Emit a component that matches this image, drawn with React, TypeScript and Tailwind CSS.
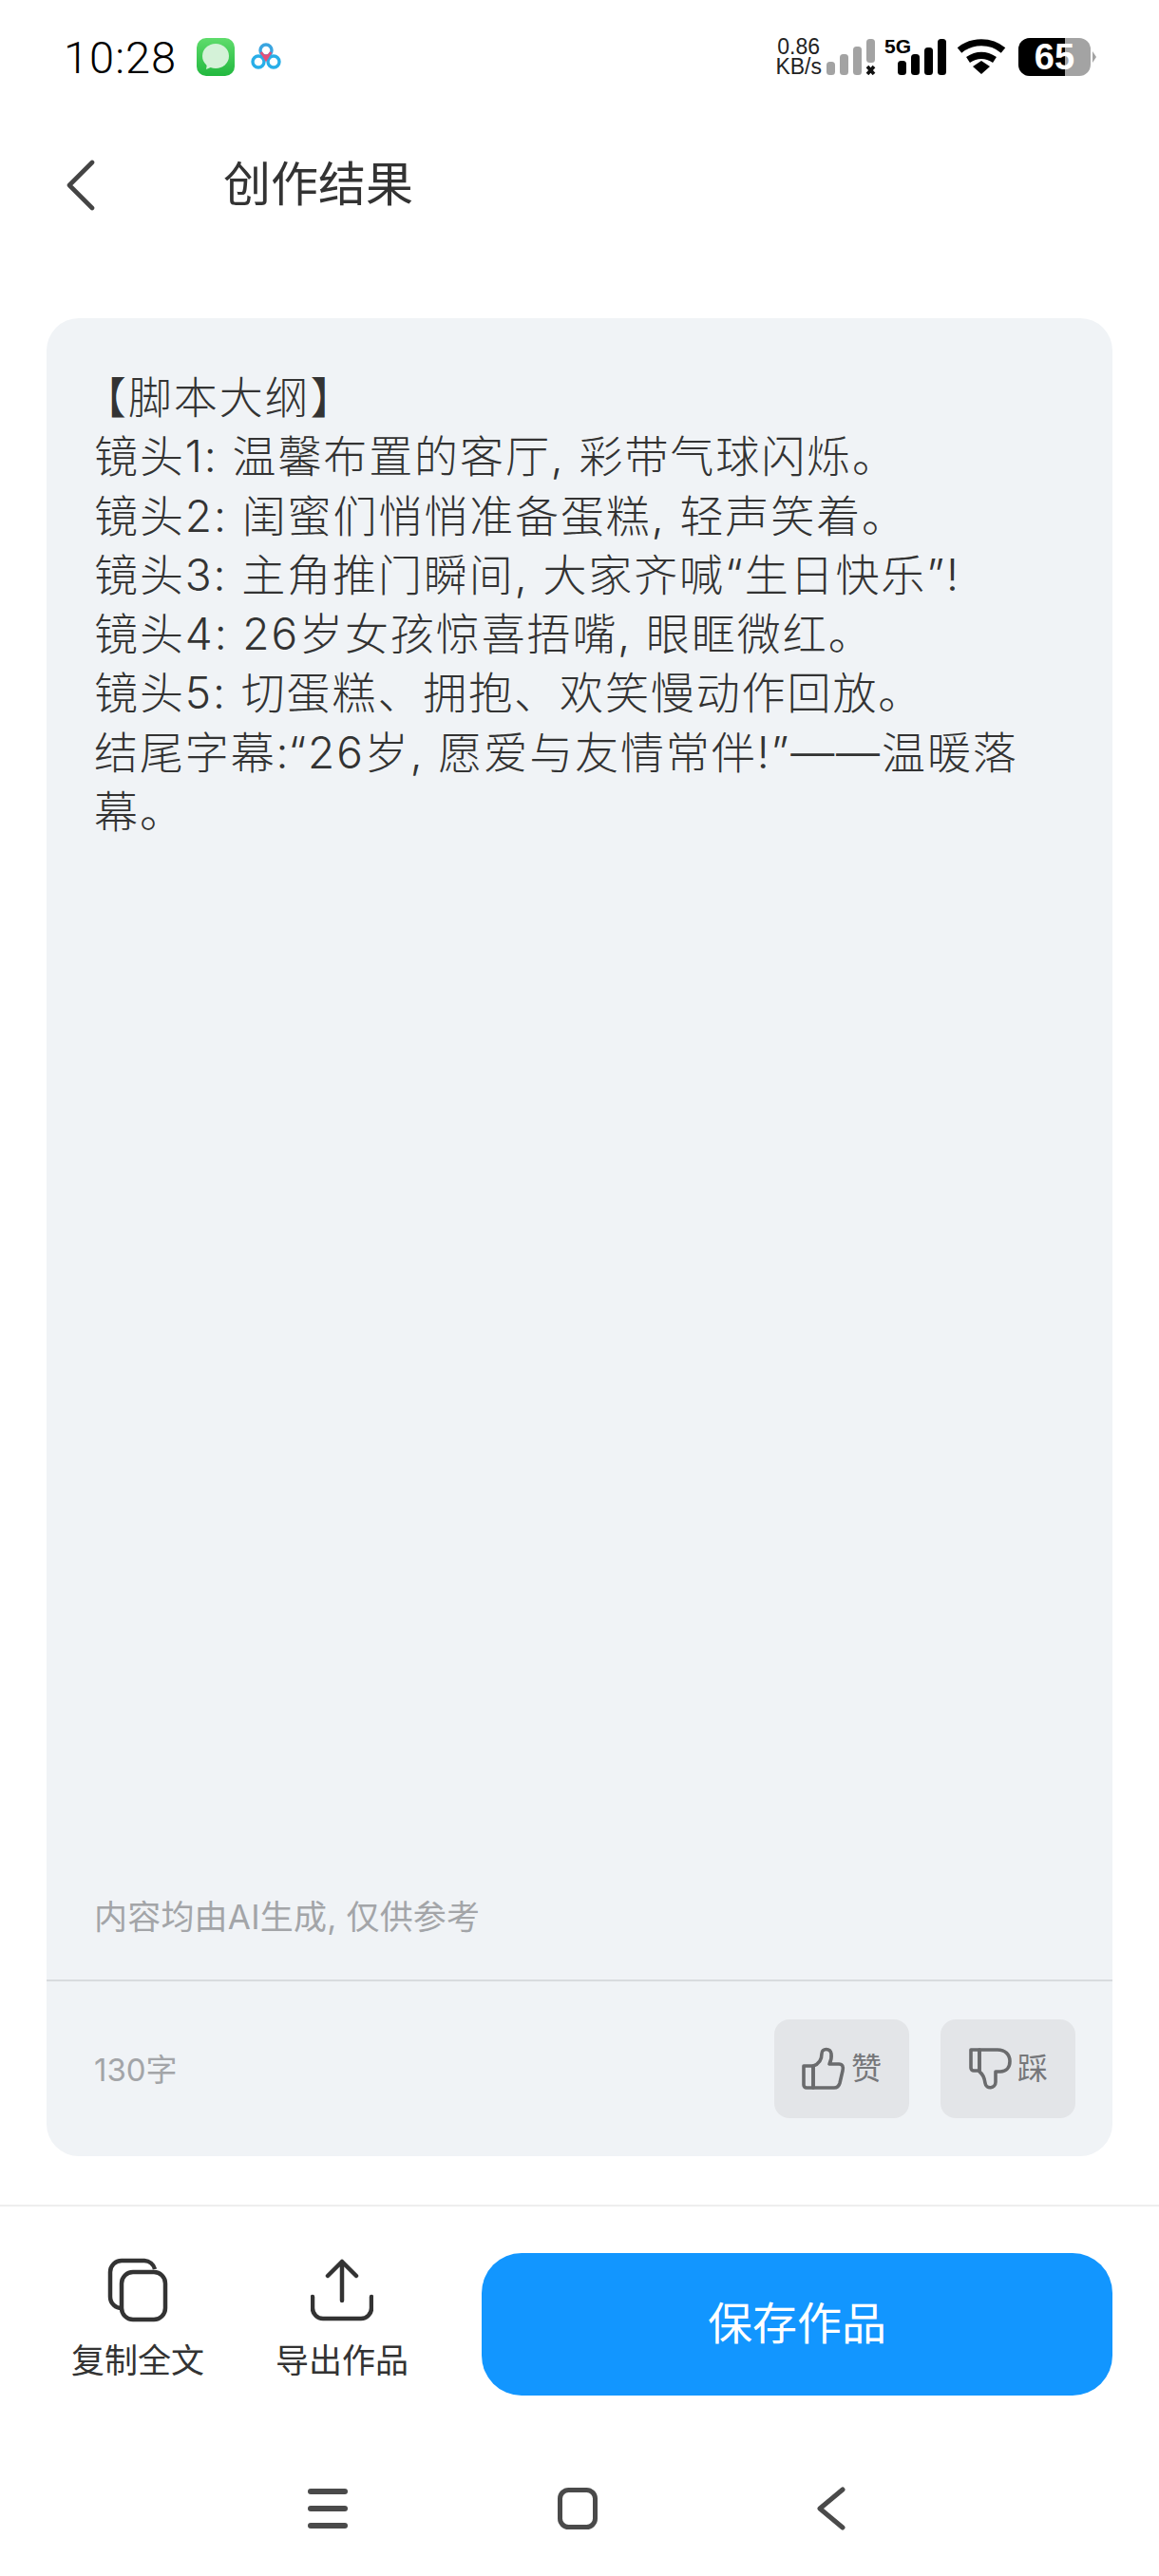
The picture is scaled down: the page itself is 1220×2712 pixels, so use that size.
import React from 'react';

const CJK = 'font-["Inter","Noto_Sans_CJK_SC","Noto_Sans",sans-serif]';

const LINES = [
  '镜头1: 温馨布置的客厅, 彩带气球闪烁。',
  '镜头2: 闺蜜们悄悄准备蛋糕, 轻声笑着。',
  '镜头3: 主角推门瞬间, 大家齐喊“生日快乐”!',
  '镜头4: 26岁女孩惊喜捂嘴, 眼眶微红。',
  '镜头5: 切蛋糕、拥抱、欢笑慢动作回放。',
  '结尾字幕:“26岁, 愿爱与友情常伴!”——温暖落幕。',
];

function StatusBar() {
  return (
    <div className="h-[120px] pl-[67px] pr-[66px] flex items-center justify-between">
      <div className="flex items-center">
        <span className='font-["Roboto",sans-serif] text-[47px] leading-none font-light text-black tracking-[1px]'>10:28</span>
        <svg width="40" height="40" viewBox="0 0 40 40" className="ml-[21px]">
          <defs>
            <linearGradient id="msg" x1="0" y1="0" x2="0" y2="1">
              <stop offset="0" stopColor="#5fdc6c" />
              <stop offset="1" stopColor="#22b83f" />
            </linearGradient>
          </defs>
          <rect width="40" height="40" rx="10" fill="url(#msg)" />
          <ellipse cx="20" cy="19" rx="14" ry="13" fill="#d4f2d8" />
          <path d="M11 27l-1 6 7-3z" fill="#d4f2d8" />
        </svg>
        <svg width="36" height="36" viewBox="0 0 36 36" className="ml-[15px]" fill="none" strokeWidth="3.4">
          <circle cx="18" cy="11" r="6" stroke="#3aa5e0" />
          <circle cx="10" cy="23" r="6" stroke="#28aee8" />
          <circle cx="26" cy="23" r="6" stroke="#28aee8" />
          <path d="M13 13a6 6 0 0 0 5 4 6 6 0 0 0 5-4l-5 8z" stroke="#e4507a" strokeWidth="2.4" />
        </svg>
      </div>
      <div className="flex items-center">
        <div className='font-["Liberation_Sans",sans-serif] text-[23px] leading-[21px] text-[#222] text-center mr-[5px]'>
          <div>0.86</div>
          <div>KB/s</div>
        </div>
        <svg width="52" height="38" viewBox="0 0 52 38" className="mr-[17px]" fill="#a3a3a3">
          <rect x="0" y="24" width="9" height="14" rx="3.5" />
          <rect x="14" y="16" width="9" height="22" rx="3.5" />
          <rect x="28" y="8" width="9" height="30" rx="3.5" />
          <rect x="42" y="0" width="9" height="25" rx="3.5" />
          <path d="M43 29l7 8M50 29l-7 8" stroke="#111" strokeWidth="3.6" />
        </svg>
        <div className="relative w-[60px] h-[38px] mr-[8px]">
          <span className='absolute left-[-8px] top-[-3px] font-["Liberation_Sans",sans-serif] text-[21px] font-bold leading-none text-black'>5G</span>
          <svg width="60" height="38" viewBox="0 0 60 38" fill="#000" className="absolute inset-0">
            <rect x="6" y="23" width="9" height="15" rx="3.5" />
            <rect x="20" y="16" width="9" height="22" rx="3.5" />
            <rect x="34" y="9" width="9" height="29" rx="3.5" />
            <rect x="48" y="0" width="9" height="38" rx="3.5" />
          </svg>
        </div>
        <svg width="52" height="38" viewBox="0 0 52 38" className="mr-[13px]" fill="none" stroke="#000" strokeWidth="7">
          <path d="M3 12c13-11 33-11 46 0" />
          <path d="M12 22c9-6 19-6 28 0" />
          <path d="M17 29l9-6 9 6-9 8z" fill="#000" stroke="none" />
        </svg>
        <div className="relative w-[76px] h-[40px] rounded-[12px] bg-[#a3a3a3] overflow-hidden">
          <div className="absolute left-0 top-0 bottom-0 w-[49px] bg-black" />
          <span className='absolute inset-0 flex items-center justify-center font-["Liberation_Sans",sans-serif] text-[38px] font-bold leading-none text-white'>65</span>
        </div>
        <div className="w-0 h-0 ml-[2px] border-y-[6px] border-y-transparent border-l-[4px] border-l-[#a3a3a3]" />
      </div>
    </div>
  );
}

function Header() {
  return (
    <div className="h-[152px] flex items-center pl-[69px]">
      <svg width="32" height="54" viewBox="0 0 32 54" fill="none" stroke="#444" strokeWidth="4.6" strokeLinecap="round" strokeLinejoin="round" className="mb-[2px]">
        <path d="M28 3L4 27l24 24" />
      </svg>
      <span className="ml-[134px] mb-[4px] text-[50px] leading-none text-[#333]">创作结果</span>
    </div>
  );
}

function ThumbUp() {
  return (
    <svg width="46" height="46" viewBox="0 0 46 46" fill="none" stroke="#6a6b6d" strokeWidth="3.6" strokeLinejoin="round">
      <path d="M2 20h10v23H5a3 3 0 0 1-3-3z" />
      <path d="M12 20c6-2 9-7 9-13 0-6 9-6 10 0 .6 4-.5 8-2 11h10c4 0 5 3 4 7l-3 13c-.8 3-2.500 5-6 5H12z" />
    </svg>
  );
}

function ThumbDown() {
  return (
    <svg width="46" height="46" viewBox="0 0 46 46" fill="none" stroke="#6a6b6d" strokeWidth="3.6" strokeLinejoin="round">
      <path d="M3 3h9v22H6a3 3 0 0 1-3-3z" />
      <path d="M12 3h19c8 0 13 5 13 12s-4 11-10 11h-5v11c0 7-10 8-11 1-.5-4-2-9-6-12z" />
    </svg>
  );
}

function FeedbackButton({ icon, label }: { icon: React.ReactNode; label: string }) {
  return (
    <div className="w-[142px] h-[104px] rounded-[16px] bg-[#e3e5e8] flex items-center justify-center gap-[6px]">
      {icon}
      <span className="text-[32px] leading-none text-[#76777a]">{label}</span>
    </div>
  );
}

function BottomAction({ icon, label, className }: { icon: React.ReactNode; label: string; className: string }) {
  return (
    <div className={`flex flex-col items-center pt-[5px] ${className}`}>
      <div className="h-[68px] flex items-center justify-center">{icon}</div>
      <span className="mt-[17px] text-[35px] leading-[46px] text-[#333] whitespace-nowrap">{label}</span>
    </div>
  );
}

export default function App() {
  return (
    <div className={`w-[1220px] h-[2712px] bg-white flex flex-col overflow-hidden ${CJK}`}>
      <StatusBar />
      <Header />

      {/* Result card */}
      <div className="mx-[49px] mt-[63px] h-[1935px] rounded-[34px] bg-[#f0f3f6] flex flex-col">
        <div className="flex-1 pl-[50px] pr-[80px] pt-[52px] flex flex-col">
          <div className="flex-1 text-[46px] leading-[62.3px] tracking-[1.9px] text-[#333] font-light">
            <div className="-ml-[12px]">【脚本大纲】</div>
            {LINES.map((line) => (
              <div key={line}>{line}</div>
            ))}
          </div>
          <div className="mb-[44px] text-[35px] leading-[44px] tracking-[0.2px] text-[#a3a5a8]">内容均由AI生成, 仅供参考</div>
        </div>
        <div className="h-[2px] bg-[#d8dbde]" />
        <div className="h-[184px] pl-[50px] pr-[39px] flex items-center justify-between">
          <span className="mt-[2px] text-[33px] leading-none text-[#a3a5a8]">130字</span>
          <div className="flex gap-[33px]">
            <FeedbackButton icon={<ThumbUp />} label="赞" />
            <FeedbackButton icon={<ThumbDown />} label="踩" />
          </div>
        </div>
      </div>

      {/* Action bar */}
      <div className="mt-[51px] h-[2px] bg-[#eeeeee]" />
      <div className="mt-[49px] h-[150px] pr-[49px] flex items-start">
        <BottomAction
          className="w-[290px]"
          label="复制全文"
          icon={
            <svg width="64" height="68" viewBox="0 0 64 68" fill="none" stroke="#333" strokeWidth="4.5">
              <path d="M16 53a12 12 0 0 1-13-12V15A12 12 0 0 1 15 3h24a12 12 0 0 1 11 9" />
              <rect x="15" y="15" width="46" height="50" rx="12" />
            </svg>
          }
        />
        <BottomAction
          className="w-[140px]"
          label="导出作品"
          icon={
            <svg width="66" height="66" viewBox="0 0 66 66" fill="none" stroke="#333" strokeWidth="4.5" strokeLinecap="round" strokeLinejoin="round">
              <path d="M33 44V3M18 18L33 3l15 15" />
              <path d="M2 40v12a11 11 0 0 0 11 11h40a11 11 0 0 0 11-11V40" />
            </svg>
          }
        />
        <div className="ml-[77px] flex-1 h-[150px] pb-[3px] rounded-[42px] bg-[#1296ff] flex items-center justify-center text-[47px] leading-none text-white">
          保存作品
        </div>
      </div>

      {/* System nav */}
      <div className="flex-1 pt-[48px] flex items-center justify-center">
        <div className="flex items-center pr-[6px]">
          <svg width="42" height="42" viewBox="0 0 42 42" fill="#4a4a4a">
            <rect x="0" y="0" width="42" height="6" rx="3" />
            <rect x="0" y="18" width="42" height="6" rx="3" />
            <rect x="0" y="36" width="42" height="6" rx="3" />
          </svg>
          <svg width="42" height="44" viewBox="0 0 42 44" className="ml-[221px]" fill="none" stroke="#4a4a4a" strokeWidth="5">
            <rect x="2.500" y="2.500" width="37" height="39" rx="9" />
          </svg>
          <svg width="30" height="46" viewBox="0 0 30 46" className="ml-[231px]" fill="none" stroke="#4a4a4a" strokeWidth="5" strokeLinecap="round" strokeLinejoin="round">
            <path d="M27 3L3 23l24 20" />
          </svg>
        </div>
      </div>
    </div>
  );
}
